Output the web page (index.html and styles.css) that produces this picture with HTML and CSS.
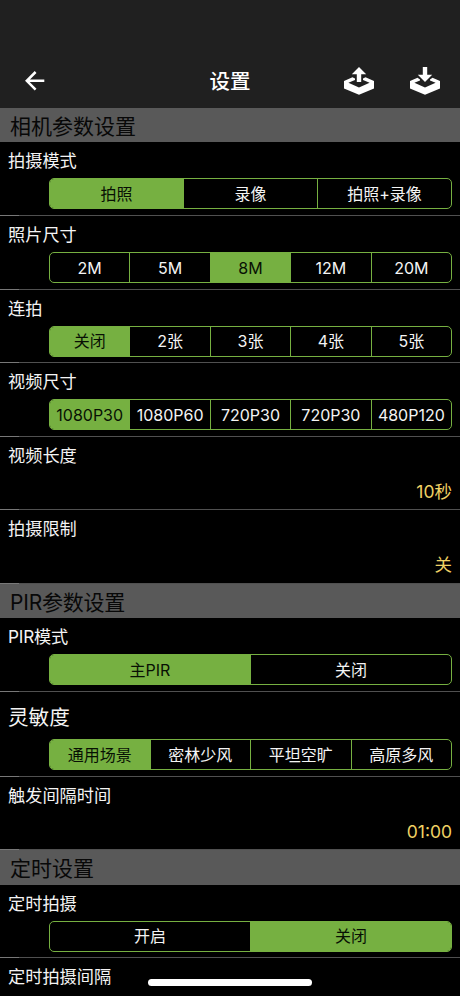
FILE: index.html
```html
<!DOCTYPE html>
<html lang="zh-CN">
<head>
<meta charset="utf-8">
<meta name="viewport" content="width=device-width">
<title>设置</title>
<link rel="stylesheet" href="styles.css">
</head>
<body>
<div class="screen">
  <header class="navbar">
    <svg class="back" viewBox="0 0 22 22"><path d="M20.3 10.8H3M11.6 2L2.8 10.8L11.6 19.6"/></svg>
    <h1>设置</h1>
    <div class="actions">
      <svg class="tray" viewBox="0 0 32 30"><path d="M9.5 11.2L1 15V22.6L16 28.8L31 22.6V15L22.5 11.2L20 12.6V14L26.6 16.8L16 21.6L5.4 16.8L12 14V12.6Z"/><path d="M16 1L23.2 8.2H18.2V16H13.8V8.2H8.8Z"/></svg>
      <svg class="tray" viewBox="0 0 32 30"><path d="M8.5 11.7L1 15V22.6L16 28.8L31 22.6V15L23.5 11.7L21 13.6V14.4L26.6 16.8L16 21.6L5.4 16.8L11 14.4V13.6Z"/><path d="M16 16L8.8 8.8H13.8V1H18.2V8.8H23.2Z"/></svg>
    </div>
  </header>
  <main>
    <h2>相机参数设置</h2>
    <section class="row"><h3>拍摄模式</h3><div class="segments"><span class="on">拍照</span><span>录像</span><span>拍照+录像</span></div></section>
    <section class="row"><h3>照片尺寸</h3><div class="segments"><span>2M</span><span>5M</span><span class="on">8M</span><span>12M</span><span>20M</span></div></section>
    <section class="row"><h3>连拍</h3><div class="segments"><span class="on">关闭</span><span>2张</span><span>3张</span><span>4张</span><span>5张</span></div></section>
    <section class="row"><h3>视频尺寸</h3><div class="segments"><span class="on">1080P30</span><span>1080P60</span><span>720P30</span><span>720P30</span><span>480P120</span></div></section>
    <section class="row"><h3>视频长度</h3><p class="value">10秒</p></section>
    <section class="row"><h3>拍摄限制</h3><p class="value">关</p></section>
    <h2 class="latin">PIR参数设置</h2>
    <section class="row"><h3 class="latin">PIR模式</h3><div class="segments"><span class="on">主PIR</span><span>关闭</span></div></section>
    <section class="row tall"><h3>灵敏度</h3><div class="segments"><span class="on">通用场景</span><span>密林少风</span><span>平坦空旷</span><span>高原多风</span></div></section>
    <section class="row"><h3>触发间隔时间</h3><p class="value">01:00</p></section>
    <h2>定时设置</h2>
    <section class="row"><h3>定时拍摄</h3><div class="segments"><span>开启</span><span class="on">关闭</span></div></section>
    <section class="row"><h3>定时拍摄间隔</h3></section>
  </main>
  <div class="home-indicator"></div>
</div>
</body>
</html>
```
FILE: styles.css
```css
* { box-sizing: border-box; margin: 0; padding: 0; }
body {
  background: #000;
  color: #f4f4f4;
  font-family: Inter, "Noto Sans CJK SC", sans-serif;
}
.screen { position: relative; height: 996px; overflow: hidden; }
.navbar {
  display: grid;
  grid-template-columns: 1fr auto 1fr;
  align-items: center;
  height: 108px;
  padding: 54px 19px 0 24px;
  background: #202020;
}
.navbar h1 { font-size: 20.5px; line-height: 28px; font-weight: 500; color: #fff; padding: 2px 5px 0 0; }
.back { width: 22px; height: 22px; fill: none; stroke: #fff; stroke-width: 2.5; }
.actions { display: flex; justify-content: flex-end; gap: 34px; }
.tray { width: 32px; height: 30px; fill: #fff; }
h2 {
  height: 34.4px;
  padding-left: 10px;
  background: #595959;
  color: #080808;
  font-size: 21px;
  line-height: 38px;
  font-weight: 400;
}
.latin { letter-spacing: -0.2px; }
.row {
  display: flex;
  flex-direction: column;
  justify-content: space-between;
  height: 73.6px;
  padding: 6px 8px 5.5px;
  border-bottom: 1px solid #505050;
  border-image: linear-gradient(to right, #787878 20px, #505050 20px) 1;
}
h3 { font-size: 17.2px; line-height: 26px; font-weight: 400; }
.segments {
  display: flex;
  height: 31px;
  margin-left: 41px;
  border: 1.5px solid #76b041;
  border-radius: 5px;
  overflow: hidden;
}
.segments span {
  flex: 1 1 0;
  display: flex;
  align-items: center;
  justify-content: center;
  white-space: nowrap;
  font-size: 16px;
  line-height: 24px;
}
.segments span + span { border-left: 1px solid #76b041; }
.segments .on { background: #76b041; color: #081004; }
.value { color: #f0d264; font-size: 17.5px; line-height: 24px; text-align: right; }
.tall { height: 84.8px; padding-top: 11px; }
.tall h3 { font-size: 20.6px; line-height: 30px; }
.home-indicator {
  position: absolute;
  left: 148px;
  top: 979px;
  width: 164px;
  height: 7px;
  border-radius: 4px;
  background: #fff;
}
```
